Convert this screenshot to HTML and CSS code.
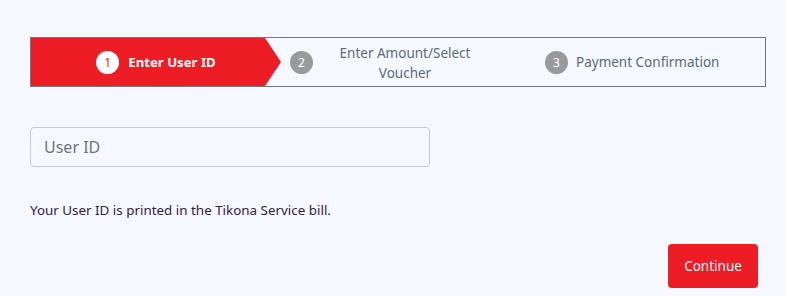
FILE: index.html
```html
<!DOCTYPE html>
<html>
<head>
<meta charset="utf-8">
<link rel="stylesheet" href="styles.css">
</head>
<body>
<div class="page">
  <div class="stepper">
    <div class="step step-active">
      <span class="num num-active">1</span>
      <span class="label label-active">Enter User ID</span>
    </div>
    <div class="step step-two">
      <span class="num">2</span>
      <span class="label label-two">Enter Amount/Select<br>Voucher</span>
    </div>
    <div class="step step-three">
      <span class="num">3</span>
      <span class="label">Payment Confirmation</span>
    </div>
  </div>
  <input class="field" type="text" placeholder="User ID">
  <p class="hint">Your User ID is printed in the Tikona Service bill.</p>
  <div class="actions">
    <button class="btn">Continue</button>
  </div>
</div>
</body>
</html>
```
FILE: styles.css
```css
html, body {
  margin: 0;
  padding: 0;
  background: #f5f8fe;
  font-family: "Noto Sans", "Open Sans", sans-serif;
}
.page {
  padding: 37px 20px 0 30px;
}
.stepper {
  display: flex;
  height: 48px;
  border: 1px solid #6b7785;
  align-items: stretch;
}
.step {
  display: flex;
  align-items: center;
}
.step-active {
  width: 250px;
  justify-content: center;
  background: #ee1c25;
  clip-path: polygon(0 0, calc(100% - 16px) 0, 100% 50%, calc(100% - 16px) 100%, 0 100%);
}
.num {
  width: 23px;
  height: 23px;
  border-radius: 50%;
  background: #999a9c;
  color: #fff;
  font-size: 12px;
  display: flex;
  align-items: center;
  justify-content: center;
  flex: none;
}
.num-active {
  background: #fff;
  color: #ee1c25;
}
.label {
  color: #5d6b79;
  font-size: 13.5px;
  margin-left: 8px;
}
.label-active {
  color: #fff;
  font-weight: 700;
  font-size: 13.2px;
  margin-left: 9px;
}
.step-two {
  padding-left: 9px;
}
.label-two {
  width: 184px;
  margin-left: 0;
  text-align: center;
  line-height: 20px;
  padding-top: 1px;
}
.step-three {
  margin-left: 48px;
}
.field {
  display: block;
  box-sizing: border-box;
  margin-top: 40px;
  width: 400px;
  height: 40px;
  border: 1px solid #c6c9ce;
  border-radius: 4px;
  background: transparent;
  padding: 0 13px;
  font-family: inherit;
  font-size: 16px;
  color: #333;
}
.field::placeholder {
  color: #6c757d;
}
.hint {
  margin: 34px 0 0;
  font-size: 13.4px;
  color: #34203d;
}
.actions {
  display: flex;
  justify-content: flex-end;
  padding-right: 8px;
  margin-top: 25px;
}
.btn {
  width: 90px;
  height: 44px;
  border: none;
  border-radius: 4px;
  background: #ee1c25;
  color: #fff;
  font-family: inherit;
  font-size: 13.5px;
}
```
